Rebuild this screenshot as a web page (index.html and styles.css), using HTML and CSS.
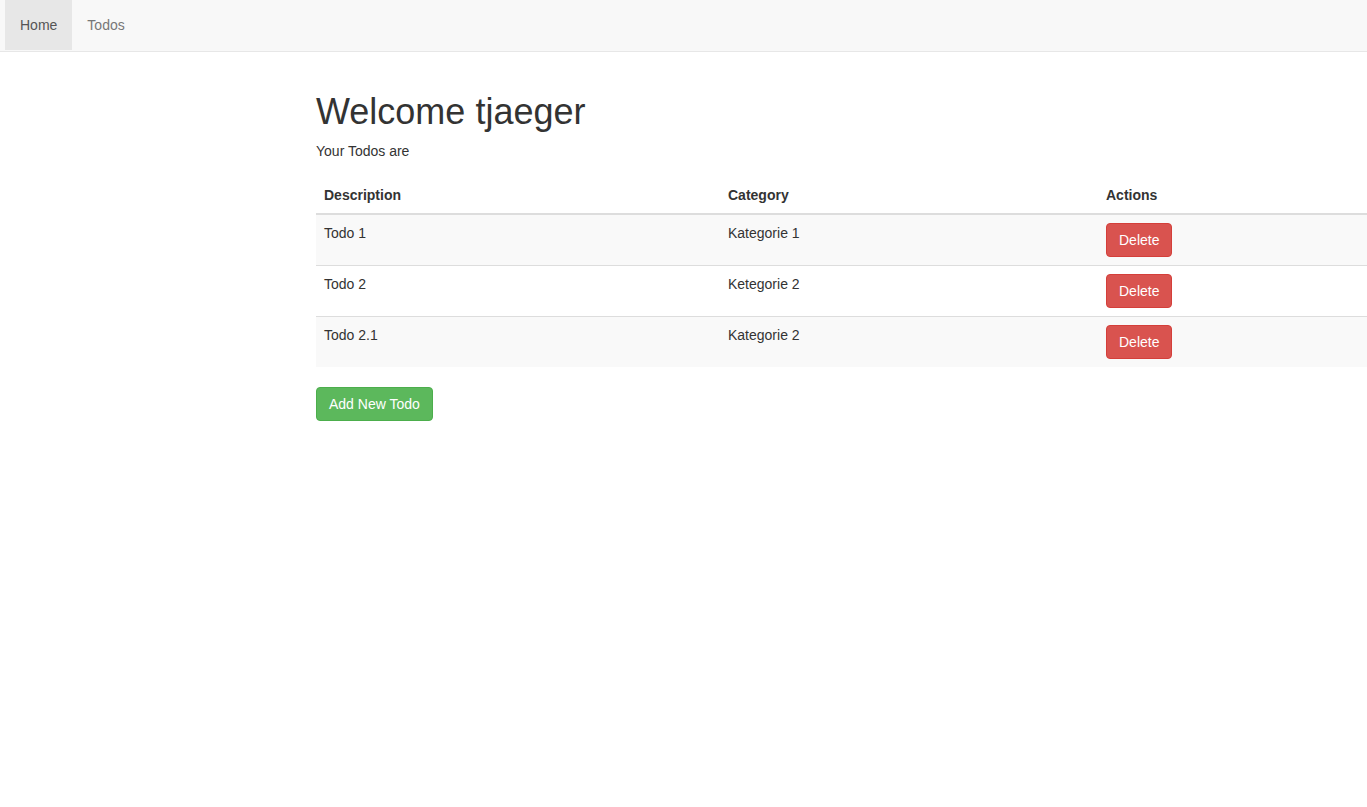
FILE: index.html
```html
<!DOCTYPE html>
<html>
<head>
<meta charset="utf-8">
<title>Todos</title>
<link rel="stylesheet" href="styles.css">
</head>
<body>
<nav class="navbar">
  <ul class="nav">
    <li class="active"><a href="#">Home</a></li>
    <li><a href="#">Todos</a></li>
  </ul>
</nav>
<main class="content">
  <h1 class="title">Welcome tjaeger</h1>
  <p class="intro">Your Todos are</p>
  <table class="table">
    <thead>
      <tr>
        <th class="col-desc">Description</th>
        <th class="col-cat">Category</th>
        <th class="col-act">Actions</th>
      </tr>
    </thead>
    <tbody>
      <tr class="odd">
        <td>Todo 1</td>
        <td>Kategorie 1</td>
        <td><a class="btn btn-danger" href="#">Delete</a></td>
      </tr>
      <tr>
        <td>Todo 2</td>
        <td>Ketegorie 2</td>
        <td><a class="btn btn-danger" href="#">Delete</a></td>
      </tr>
      <tr class="odd">
        <td>Todo 2.1</td>
        <td>Kategorie 2</td>
        <td><a class="btn btn-danger" href="#">Delete</a></td>
      </tr>
    </tbody>
  </table>
  <a class="btn btn-success" href="#">Add New Todo</a>
</main>
</body>
</html>
```

FILE: styles.css
```css
* { box-sizing: border-box; }
html, body { margin: 0; padding: 0; }
body {
  font-family: "Liberation Sans", Arial, Helvetica, sans-serif;
  font-size: 14px;
  line-height: 20px;
  color: #333;
  background: #fff;
}
.navbar {
  height: 52px;
  background: #f8f8f8;
  border-bottom: 1px solid #e7e7e7;
  padding-left: 5px;
}
.nav {
  list-style: none;
  margin: 0;
  padding: 0;
  display: flex;
}
.nav a {
  display: block;
  padding: 15px 15px;
  line-height: 20px;
  color: #777;
  text-decoration: none;
}
.nav .active a {
  background: #e7e7e7;
  color: #555;
}
.content {
  margin-left: 316px;
  padding-top: 40px;
}
.title {
  font-size: 36px;
  font-weight: 500;
  line-height: 39.6px;
  margin: 0 0 9px;
}
.intro {
  margin: 0 0 16px;
}
.table {
  width: 1051px;
  border-collapse: collapse;
  border-spacing: 0;
  margin-bottom: 20px;
}
.table th, .table td {
  padding: 8px;
  text-align: left;
  vertical-align: top;
  line-height: 20px;
}
.table th {
  font-weight: bold;
  border-bottom: 2px solid #ddd;
}
.table td {
  border-top: 1px solid #ddd;
}
.col-desc { width: 404px; }
.col-cat { width: 378px; }
.table tr.odd td { background: #f9f9f9; }
.btn {
  display: inline-block;
  padding: 6px 12px;
  font-size: 14px;
  line-height: 20px;
  border: 1px solid transparent;
  border-radius: 4px;
  color: #fff;
  text-decoration: none;
}
.btn-danger {
  background: #d9534f;
  border-color: #d43f3a;
}
.btn-success {
  background: #5cb85c;
  border-color: #4cae4c;
}
```
